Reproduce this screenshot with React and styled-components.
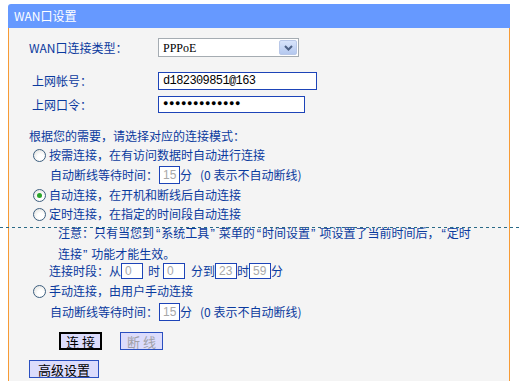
import React from "react";
import styled, { createGlobalStyle } from "styled-components";

const Global = createGlobalStyle`
  html, body { margin: 0; padding: 0; background: #ffffff; }
  body { font-family: "Noto Sans CJK SC", "Noto Sans", sans-serif; font-size: 12px; }
`;

const Page = styled.div`
  position: relative;
  padding: 4px 9px 0 8px;
  height: 381px;
  box-sizing: border-box;
  overflow: hidden;
`;

const Panel = styled.div`
  width: 502px;
  display: flex;
  flex-direction: column;
`;

const Header = styled.div`
  height: 24px;
  background: #6699ff;
  border-top-left-radius: 3px;
  color: #ffffff;
  font-size: 12px;
  line-height: 24px;
  padding-left: 6px;
`;

const Body = styled.div`
  background: #f4f4f4;
  border-left: 1px solid #f79b36;
  border-right: 1px solid #f79b36;
  height: 360px;
  display: flex;
  flex-direction: column;
  color: #0a3a9e;
`;

const Row = styled.div`
  display: flex;
  align-items: center;
  height: ${(p) => p.$h}px;
  margin-top: ${(p) => p.$mt}px;
  padding-left: ${(p) => p.$pl}px;
  white-space: nowrap;
  line-height: 1;
`;

const Label = styled.span`
  width: ${(p) => p.$w}px;
  flex: none;
`;

const SelectBox = styled.div`
  width: 141px;
  height: 19px;
  box-sizing: border-box;
  border: 1px solid #a5acb2;
  background: #ffffff;
  display: flex;
  align-items: stretch;
  color: #000;
  font-family: "Liberation Serif", serif;
  font-size: 12px;
`;

const SelectText = styled.span`
  flex: 1;
  display: flex;
  align-items: center;
  padding-left: 4px;
`;

const SelectBtn = styled.span`
  width: 16px;
  margin: 1px;
  border: 1px solid #b9c8e8;
  border-radius: 2px;
  background: linear-gradient(#d8e4fb, #b4c8ef);
  display: flex;
  align-items: center;
  justify-content: center;
`;

const TextInput = styled.div`
  width: ${(p) => p.$w}px;
  height: ${(p) => p.$h}px;
  box-sizing: border-box;
  border: 1px solid #1d44b8;
  background: #ffffff;
  color: #000;
  display: flex;
  align-items: center;
  padding-left: 4px;
  font-family: "Liberation Mono", monospace;
  font-size: 12px;
  letter-spacing: -0.6px;
`;

const Dots = styled.span`
  font-size: 9px;
  letter-spacing: 0.6px;
  color: #000;
`;

const SmallInput = styled.div`
  width: ${(p) => p.$w || 22}px;
  height: ${(p) => p.$h}px;
  box-sizing: border-box;
  border: 1px solid #1d44b8;
  background: #ffffff;
  color: #a8a8a8;
  font-family: "Liberation Sans", sans-serif;
  font-size: 12px;
  display: flex;
  align-items: center;
  padding-left: 3px;
  flex: none;
`;

const Radio = styled.span`
  width: 13px;
  height: 13px;
  box-sizing: border-box;
  border-radius: 50%;
  border: 1px solid #3d5f80;
  background: radial-gradient(circle at 60% 65%, #ffffff 30%, #dcdcd7 100%);
  display: flex;
  align-items: center;
  justify-content: center;
  margin-right: 3px;
  flex: none;
  &::after {
    content: "";
    width: 5px;
    height: 5px;
    border-radius: 50%;
    background: ${(p) => (p.$on ? "#2aa52a" : "transparent")};
  }
`;

const Gap = styled.span`
  display: inline-block;
  width: ${(p) => p.$w}px;
  flex: none;
`;

const Note = styled.div`
  margin-top: 1px;
  padding-left: 49px;
  line-height: 20px;
  height: 40px;
  white-space: nowrap;
`;

const Q = styled.span`
  font-family: "Liberation Sans", sans-serif;
  font-size: 13px;
  margin: ${(p) => (p.$close ? "0 4px 0 1px" : "0 1px 0 2px")};
`;

const Btn = styled.div`
  width: ${(p) => p.$w}px;
  height: 18px;
  box-sizing: border-box;
  border: ${(p) => (p.$focus ? "2px solid #000000" : "1px solid #2a4fc0")};
  background: #dcdcfc;
  color: ${(p) => (p.$disabled ? "#a0a0a8" : "#000000")};
  display: flex;
  align-items: center;
  justify-content: center;
  font-size: 13px;
  margin-left: ${(p) => p.$ml || 0}px;
  flex: none;
`;

const Dashed = styled.div`
  position: absolute;
  left: 0;
  right: 0;
  top: 227px;
  height: 1px;
  background: repeating-linear-gradient(to right, #2a6a86 0 3px, transparent 3px 6px);
`;

export default function App() {
  return (
    <>
      <Global />
      <Page>
        <Panel>
          <Header>WAN口设置</Header>
          <Body>
            <Row $h={19} $mt={10} $pl={20}>
              <Label $w={129}>WAN口连接类型：</Label>
              <SelectBox>
                <SelectText>PPPoE</SelectText>
                <SelectBtn>
                  <svg width="9" height="6" viewBox="0 0 9 6">
                    <path d="M1 1 L4.5 4.5 L8 1" stroke="#4d6185" strokeWidth="2" fill="none" />
                  </svg>
                </SelectBtn>
              </SelectBox>
            </Row>
            <Row $h={18} $mt={15} $pl={23}>
              <Label $w={126}>上网帐号：</Label>
              <TextInput $w={159} $h={18}>d182309851@163</TextInput>
            </Row>
            <Row $h={17} $mt={6} $pl={23}>
              <Label $w={126}>上网口令：</Label>
              <TextInput $w={147} $h={17}>
                <Dots>●●●●●●●●●●●●●</Dots>
              </TextInput>
            </Row>
            <Row $h={16} $mt={15} $pl={20}>根据您的需要，请选择对应的连接模式：</Row>
            <Row $h={16} $mt={3} $pl={24}>
              <Radio />
              按需连接，在有访问数据时自动进行连接
            </Row>
            <Row $h={18} $mt={3} $pl={41}>
              自动断线等待时间：<Gap $w={1} />
              <SmallInput $w={21} $h={18}>15</SmallInput>分<Gap $w={8} />(0 表示不自动断线)
            </Row>
            <Row $h={16} $mt={3} $pl={24}>
              <Radio $on />
              自动连接，在开机和断线后自动连接
            </Row>
            <Row $h={16} $mt={3} $pl={24}>
              <Radio />
              定时连接，在指定的时间段自动连接
            </Row>
            <Note>
              注意：只有当您到<Q>“</Q>系统工具<Q $close>”</Q>菜单的<Q>“</Q>时间设置<Q $close>”</Q>项设置了当前时间后，<Q>“</Q>定时
              <br />
              连接<Q $close>”</Q>功能才能生效。
            </Note>
            <Row $h={16} $mt={0} $pl={40}>
              连接时段：从
              <SmallInput $h={16}>0</SmallInput>
              <Gap $w={5} />时<Gap $w={3} />
              <SmallInput $h={16}>0</SmallInput>
              <Gap $w={6} />分到
              <SmallInput $h={16}>23</SmallInput>时
              <SmallInput $h={16}>59</SmallInput>分
            </Row>
            <Row $h={16} $mt={4} $pl={24}>
              <Radio />
              手动连接，由用户手动连接
            </Row>
            <Row $h={18} $mt={4} $pl={41}>
              自动断线等待时间：<Gap $w={1} />
              <SmallInput $w={21} $h={18}>15</SmallInput>分<Gap $w={8} />(0 表示不自动断线)
            </Row>
            <Row $h={18} $mt={11} $pl={50}>
              <Btn $w={43} $focus>连 接</Btn>
              <Btn $w={43} $ml={18} $disabled>断 线</Btn>
            </Row>
            <Row $h={18} $mt={10} $pl={20}>
              <Btn $w={70}>高级设置</Btn>
            </Row>
          </Body>
        </Panel>
        <Dashed />
      </Page>
    </>
  );
}
